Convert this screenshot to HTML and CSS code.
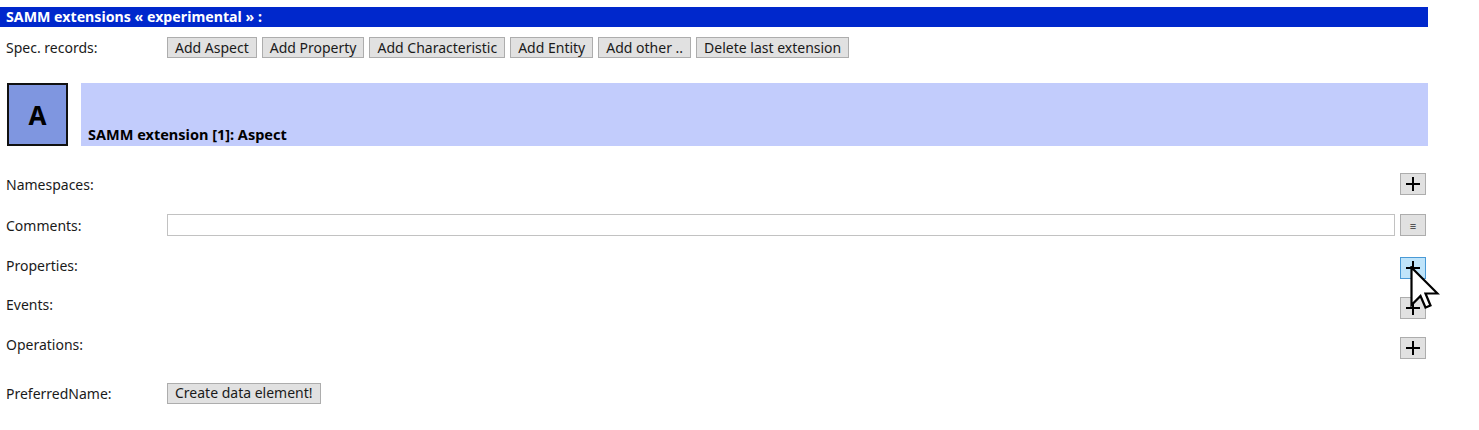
FILE: index.html
```html
<!DOCTYPE html>
<html>
<head>
<meta charset="utf-8">
<link rel="stylesheet" href="styles.css">
</head>
<body>
<div class="page">
  <div class="title-bar">SAMM extensions « experimental » :</div>
  <div class="spec-row">
    <span class="label">Spec. records:</span>
    <div class="btn-group">
      <button class="btn">Add Aspect</button>
      <button class="btn">Add Property</button>
      <button class="btn">Add Characteristic</button>
      <button class="btn">Add Entity</button>
      <button class="btn">Add other ..</button>
      <button class="btn">Delete last extension</button>
    </div>
  </div>

  <div class="ext-header">
    <div class="ext-icon">A</div>
    <div class="ext-bar">SAMM extension [1]: Aspect</div>
  </div>

  <div class="fields">
    <div class="field f-ns">
      <span class="label">Namespaces:</span>
      <span class="spacer"></span>
      <button class="sq-btn"><span class="plus"></span></button>
    </div>
    <div class="field f-comments">
      <span class="label">Comments:</span>
      <div class="text-input"></div>
      <button class="sq-btn menu-btn">≡</button>
    </div>
    <div class="field f-props">
      <span class="label">Properties:</span>
      <span class="spacer"></span>
      <button class="sq-btn hover"><span class="plus"></span></button>
    </div>
    <div class="field f-events">
      <span class="label">Events:</span>
      <span class="spacer"></span>
      <button class="sq-btn"><span class="plus"></span></button>
    </div>
    <div class="field f-ops">
      <span class="label">Operations:</span>
      <span class="spacer"></span>
      <button class="sq-btn"><span class="plus"></span></button>
    </div>
    <div class="field f-pref">
      <span class="label">PreferredName:</span>
      <button class="btn">Create data element!</button>
    </div>
  </div>

  <svg class="cursor" width="30" height="44" viewBox="0 0 30 44">
    <path d="M1.5 1.5 L1.5 39 L10.5 30 L15.5 41.5 L20.5 39.5 L15.5 27.5 L27.5 27.5 Z" fill="#fff" stroke="#000" stroke-width="2.2" stroke-linejoin="miter"/>
  </svg>
</div>
</body>
</html>
```

FILE: styles.css
```css
html, body {
  margin: 0;
  padding: 0;
  background: #ffffff;
}

body {
  font-family: "Noto Sans", "Open Sans", sans-serif;
  font-size: 14px;
  color: #1a1a1a;
}

.page {
  position: relative;
  width: 1428px;
  padding-top: 7px;
}

.title-bar {
  background: #0028cc;
  color: #ffffff;
  font-weight: bold;
  font-size: 14.2px;
  height: 20px;
  line-height: 19px;
  padding-left: 6px;
}

.spec-row {
  display: flex;
  align-items: center;
  margin-top: 10px;
  height: 21px;
}

.label {
  width: 161px;
  padding-left: 6px;
  flex: none;
  white-space: nowrap;
}

.btn-group {
  display: flex;
  gap: 5px;
}

.btn {
  font-family: inherit;
  font-size: 14px;
  color: #1a1a1a;
  background: #e1e1e1;
  border: 1px solid #adadad;
  height: 21px;
  padding: 0 7px;
  margin: 0;
  line-height: 18px;
  white-space: nowrap;
}

.ext-header {
  display: flex;
  align-items: stretch;
  margin-top: 25px;
  height: 63px;
}

.ext-icon {
  width: 57px;
  margin-left: 7px;
  background: #7f96e0;
  border: 2px solid #111;
  display: flex;
  align-items: center;
  justify-content: center;
  font-weight: bold;
  font-size: 26px;
  color: #000;
}

.ext-bar {
  flex: 1;
  margin-left: 13px;
  background: #c2ccfc;
  font-weight: bold;
  font-size: 14.5px;
  color: #000;
  display: flex;
  align-items: flex-end;
  padding: 0 0 2px 7px;
}

.fields {
  display: flex;
  flex-direction: column;
}

.field {
  display: flex;
  align-items: center;
  height: 22px;
}

.f-ns { margin-top: 27px; }
.f-comments { margin-top: 19px; }
.f-props { margin-top: 21px; }
.f-events { margin-top: 18px; }
.f-ops { margin-top: 18px; }
.f-pref { margin-top: 23px; }

.f-props .label { margin-top: -6px; }
.f-events .label { margin-top: -8px; }
.f-ops .label { margin-top: -8px; }

.spacer {
  flex: 1;
}

.text-input {
  flex: 1;
  height: 20px;
  border: 1px solid #c2c2c2;
  background: #fff;
}

.sq-btn {
  width: 26px;
  height: 22px;
  margin: 0 2px 0 5px;
  padding: 0;
  background: #e1e1e1;
  border: 1px solid #adadad;
  display: flex;
  align-items: center;
  justify-content: center;
  font-family: inherit;
  color: #333;
}

.sq-btn.hover {
  background: #bfe4fa;
  border-color: #4a9ad6;
}

.menu-btn {
  font-size: 11px;
}

.plus {
  position: relative;
  width: 14px;
  height: 14px;
  display: block;
}

.plus::before,
.plus::after {
  content: "";
  position: absolute;
  background: #000;
}

.plus::before {
  left: 0;
  top: 6px;
  width: 14px;
  height: 2px;
}

.plus::after {
  left: 6px;
  top: 0;
  width: 2px;
  height: 14px;
}

.cursor {
  position: absolute;
  left: 1410px;
  top: 266px;
}
```
